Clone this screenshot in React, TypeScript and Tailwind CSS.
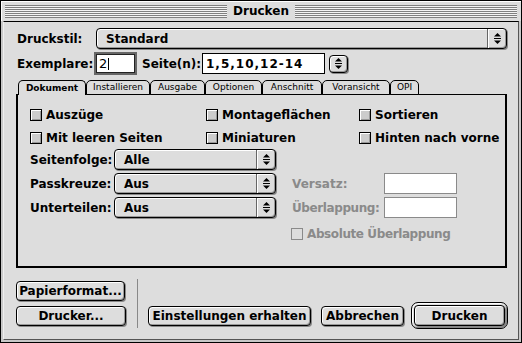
import React from 'react';

const bevel = 'shadow-[inset_1px_1px_0_#fff,inset_-1px_-1px_0_#999,1px_1px_0_#888]';

function Arrows() {
  return (
    <svg width="7" height="11" viewBox="0 0 7 11" className="block">
      <polygon points="0,3.5 3.5,0 7,3.5" fill="#000" />
      <rect x="0" y="5" width="7" height="1" fill="#000" />
      <polygon points="0,7.5 7,7.5 3.5,11" fill="#000" />
    </svg>
  );
}

function Popup({ label, className = '' }: { label: string; className?: string }) {
  return (
    <div className={`h-[21px] flex rounded-[4px] border border-black bg-[#ddd] ${bevel} ${className}`}>
      <div className="flex-1 flex items-center pl-[9px] font-bold text-[12px]">{label}</div>
      <div className="w-[19px] border-l border-[#666] flex items-center justify-center shadow-[inset_1px_0_0_#fff]">
        <Arrows />
      </div>
    </div>
  );
}

function Checkbox({ label, disabled = false }: { label: string; disabled?: boolean }) {
  return (
    <div className={`flex items-center gap-[4px] ${disabled ? 'text-[#8a8a8a]' : 'text-black'}`}>
      <div
        className={`w-[12px] h-[12px] border ${
          disabled ? 'border-[#8a8a8a] bg-[#ddd]' : 'border-black bg-[#ccc] shadow-[inset_1px_1px_0_#fff,inset_-1px_-1px_0_#999]'
        }`}
      />
      <span className={`font-bold text-[12px] ${disabled ? 'tracking-[-0.4px]' : ''}`}>{label}</span>
    </div>
  );
}

function Button({ label, className = '' }: { label: string; className?: string }) {
  return (
    <div
      className={`h-[20px] flex items-center justify-center rounded-[4px] border border-black bg-[#ddd] font-bold text-[12px] ${bevel} ${className}`}
    >
      {label}
    </div>
  );
}

const tabs = [
  { label: 'Dokument', w: 'w-[68px]', active: true },
  { label: 'Installieren', w: 'w-[64px]' },
  { label: 'Ausgabe', w: 'w-[55px]' },
  { label: 'Optionen', w: 'w-[57px]' },
  { label: 'Anschnitt', w: 'w-[60px]' },
  { label: 'Voransicht', w: 'w-[68px]' },
  { label: 'OPI', w: 'w-[29px]' },
];

const stripes =
  'flex-1 h-[13px] bg-[repeating-linear-gradient(to_bottom,#808080_0px,#808080_1px,#f4f4f4_1px,#f4f4f4_2px)]';

export default function App() {
  return (
    <div className="w-[522px] h-[343px] flex flex-col border border-black bg-[#c8c8c8] font-['DejaVu_Sans',sans-serif] text-black overflow-hidden">
      {/* title bar */}
      <div className="h-[20px] flex items-center px-[4px] bg-[#ddd] shadow-[inset_1px_1px_0_#fff]">
        <div className={stripes} />
        <div className="px-[6px] font-bold text-[12px] leading-none">Drucken</div>
        <div className={stripes} />
      </div>

      {/* content */}
      <div className="flex-1 mx-[2px] mb-[2px] flex flex-col border-t border-black border-l border-l-[#eee] border-r border-r-[#555] border-b border-b-[#555] bg-[#ddd] pl-[13px] pr-[11px] pt-[6px]">
        {/* Druckstil */}
        <div className="flex items-center h-[21px]">
          <div className="w-[79px] font-bold text-[12px]">Druckstil:</div>
          <Popup label="Standard" className="flex-1" />
        </div>

        {/* Exemplare / Seiten */}
        <div className="flex items-center h-[23px] mt-[3px]">
          <div className="w-[77px] font-bold text-[12px]">Exemplare:</div>
          <div className="w-[43px] h-[23px] border-2 border-[#666] bg-white shadow-[inset_0_0_0_1px_#222] flex items-center pl-[3px]">
            <span className="text-[13px] leading-none">2</span>
            <span className="w-px h-[12px] bg-black ml-[1px]" />
          </div>
          <div className="ml-[5px] w-[60px] font-bold text-[12px]">Seite(n):</div>
          <div className="w-[123px] h-[21px] border border-black bg-white flex items-center pl-[3px] font-bold text-[12px] tracking-[1px]">
            1,5,10,12-14
          </div>
          <div className={`ml-[4px] w-[19px] h-[18px] rounded-[4px] border border-black bg-[#ddd] flex items-center justify-center ${bevel}`}>
            <Arrows />
          </div>
        </div>

        {/* tabs */}
        <div className="flex mt-[5px] ml-[1px] h-[14px] relative z-10">
          {tabs.map((t) => (
            <div
              key={t.label}
              className={`${t.w} h-[15px] flex items-center justify-center rounded-t-[5px] border-t border-l border-r border-black text-[9px] leading-none bg-[#ddd] ${
                t.active ? 'font-bold' : 'border-b border-b-black h-[14px]'
              }`}
            >
              {t.label}
            </div>
          ))}
        </div>

        {/* panel */}
        <div className="-ml-[1px] h-[174px] border-t border-l-2 border-r-2 border-b-2 border-black pl-[12px] pt-[8px]">
          <div className="grid grid-cols-[176px_153px_1fr]">
            <div className="h-[23px] flex items-center"><Checkbox label="Auszüge" /></div>
            <div className="h-[23px] flex items-center"><Checkbox label="Montageflächen" /></div>
            <div className="h-[23px] flex items-center"><Checkbox label="Sortieren" /></div>
            <div className="h-[23px] flex items-center"><Checkbox label="Mit leeren Seiten" /></div>
            <div className="h-[23px] flex items-center"><Checkbox label="Miniaturen" /></div>
            <div className="h-[23px] flex items-center"><Checkbox label="Hinten nach vorne" /></div>
          </div>

          <div className="flex flex-col gap-[3px]">
            <div className="flex items-center h-[21px]">
              <div className="w-[84px] font-bold text-[12px]">Seitenfolge:</div>
              <Popup label="Alle" className="w-[162px]" />
            </div>
            <div className="flex items-center h-[21px]">
              <div className="w-[84px] font-bold text-[12px]">Passkreuze:</div>
              <Popup label="Aus" className="w-[162px]" />
              <div className="ml-[16px] w-[92px] font-bold text-[12px] text-[#8a8a8a]">Versatz:</div>
              <div className="w-[73px] h-[21px] border border-[#8a8a8a] bg-white" />
            </div>
            <div className="flex items-center h-[21px]">
              <div className="w-[84px] font-bold text-[12px]">Unterteilen:</div>
              <Popup label="Aus" className="w-[162px]" />
              <div className="ml-[16px] w-[92px] font-bold text-[12px] text-[#8a8a8a] tracking-[-0.4px]">Überlappung:</div>
              <div className="w-[73px] h-[21px] border border-[#8a8a8a] bg-white" />
            </div>
          </div>

          <div className="ml-[261px] mt-[7px]">
            <Checkbox label="Absolute Überlappung" disabled />
          </div>
        </div>

        {/* bottom buttons */}
        <div className="flex h-[50px] mt-[11px] -ml-[1px]">
          <div className="flex flex-col pt-[2px] gap-[5px]">
            <Button label="Papierformat..." className="w-[109px]" />
            <Button label="Drucker..." className="w-[110px]" />
          </div>
          <div className="ml-[11px] w-[2px] h-[49px] border-l border-[#888] bg-white" />
          <div className="ml-[10px] self-end flex items-center h-[27px]">
            <Button label="Einstellungen erhalten" className="w-[163px]" />
            <Button label="Abbrechen" className="ml-[10px] w-[83px]" />
            <div className="ml-[7px] w-[97px] h-[27px] rounded-[7px] border border-black bg-[#ddd] p-[2px] shadow-[inset_1px_1px_0_#fff,inset_-1px_-1px_0_#888]">
              <Button label="Drucken" className="w-full h-[21px]" />
            </div>
          </div>
        </div>
      </div>
    </div>
  );
}
